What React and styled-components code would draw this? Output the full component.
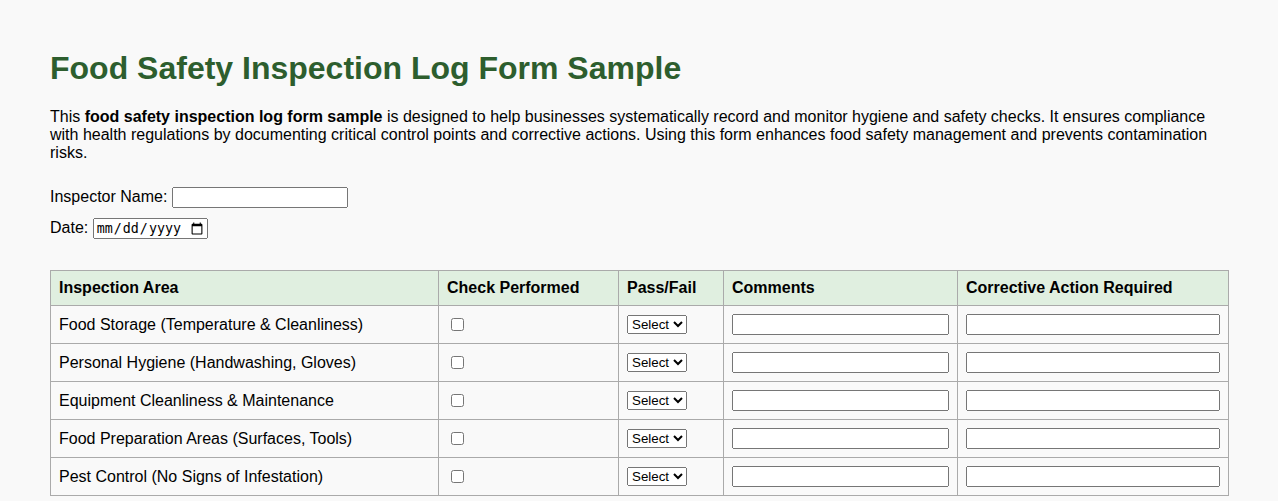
import React from "react";
import styled, { createGlobalStyle } from "styled-components";

const GlobalStyle = createGlobalStyle`
  html, body {
    margin: 0;
    background: #f9f9f9;
  }
  body {
    padding: 29px 50px;
    font-family: "Liberation Sans", Arial, sans-serif;
    font-size: 16px;
    color: #000;
  }
`;

const Title = styled.h1`
  font-size: 32px;
  font-weight: bold;
  color: #2d5e2e;
  margin: 21.44px 0 20.44px;
`;

const Intro = styled.p`
  margin: 16px 0;
  line-height: normal;
`;

const Fields = styled.div`
  margin-top: 25px;
`;

const FieldRow = styled.div`
  margin-bottom: ${(p) => (p.$last ? "0" : "10px")};
`;

const Label = styled.label`
  font-size: 16px;
`;

const TextInput = styled.input`
  font-family: "Liberation Sans", Arial, sans-serif;
  width: 176px;
  box-sizing: border-box;
`;

const DateInput = styled.input`
  width: 115px;
  box-sizing: border-box;
`;

const Table = styled.table`
  margin-top: 31px;
  width: 100%;
  border-collapse: collapse;
  table-layout: fixed;
  border: 1px solid #aaa;
`;

const Th = styled.th`
  background: #e0efe0;
  border: 1px solid #aaa;
  padding: 8px;
  text-align: left;
  font-weight: bold;
  font-size: 16px;
`;

const Td = styled.td`
  border: 1px solid #aaa;
  padding: 8px;
  vertical-align: middle;
`;

const Check = styled.input`
  margin: 3px 3px 3px 4px;
  vertical-align: middle;
`;

const Select = styled.select`
  font-family: "Liberation Sans", Arial, sans-serif;
  font-size: 13.33px;
`;

const CellInput = styled.input`
  width: 100%;
  box-sizing: border-box;
  font-family: "Liberation Sans", Arial, sans-serif;
  display: block;
`;

const areas = [
  "Food Storage (Temperature & Cleanliness)",
  "Personal Hygiene (Handwashing, Gloves)",
  "Equipment Cleanliness & Maintenance",
  "Food Preparation Areas (Surfaces, Tools)",
  "Pest Control (No Signs of Infestation)",
];

const colWidths = [388, 180, 105, 234, 271];

export default function App() {
  return (
    <>
      <GlobalStyle />
      <Title>Food Safety Inspection Log Form Sample</Title>
      <Intro>
        This <strong>food safety inspection log form sample</strong> is designed to help businesses
        systematically record and monitor hygiene and safety checks. It ensures compliance with
        health regulations by documenting critical control points and corrective actions. Using this
        form enhances food safety management and prevents contamination risks.
      </Intro>
      <Fields>
        <FieldRow>
          <Label htmlFor="inspector">Inspector Name: </Label>
          <TextInput type="text" id="inspector" />
        </FieldRow>
        <FieldRow $last>
          <Label htmlFor="date">Date: </Label>
          <DateInput type="date" id="date" />
        </FieldRow>
      </Fields>
      <Table>
        <colgroup>
          {colWidths.map((w, i) => (
            <col key={i} style={{ width: w }} />
          ))}
        </colgroup>
        <thead>
          <tr>
            <Th>Inspection Area</Th>
            <Th>Check Performed</Th>
            <Th>Pass/Fail</Th>
            <Th>Comments</Th>
            <Th>Corrective Action Required</Th>
          </tr>
        </thead>
        <tbody>
          {areas.map((a) => (
            <tr key={a}>
              <Td>{a}</Td>
              <Td>
                <Check type="checkbox" />
              </Td>
              <Td>
                <Select defaultValue="">
                  <option value="">Select</option>
                  <option value="pass">Pass</option>
                  <option value="fail">Fail</option>
                </Select>
              </Td>
              <Td>
                <CellInput type="text" />
              </Td>
              <Td>
                <CellInput type="text" />
              </Td>
            </tr>
          ))}
        </tbody>
      </Table>
    </>
  );
}
